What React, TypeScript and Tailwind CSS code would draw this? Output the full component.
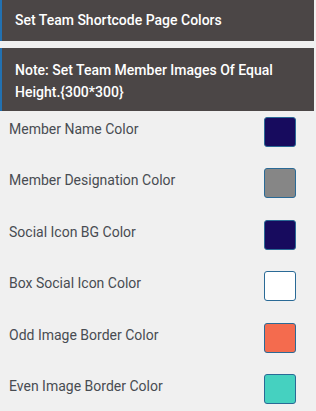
import React from 'react';

const ROWS = [
  { label: 'Member Name Color', color: '#170b5e' },
  { label: 'Member Designation Color', color: '#868686' },
  { label: 'Social Icon BG Color', color: '#170b5e' },
  { label: 'Box Social Icon Color', color: '#ffffff' },
  { label: 'Odd Image Border Color', color: '#f46b4e' },
  { label: 'Even Image Border Color', color: '#45d1c0' },
];

const App = () => {
  return (
    <div className="w-[316px] h-[411px] bg-[#f0f0f0] overflow-hidden" style={{ fontFamily: 'Roboto, "Liberation Sans", sans-serif' }}>
      <div className="w-[314px] h-[41px] bg-[#4b4646] border-l-2 border-[#2271b1] pl-[13px] flex items-center text-white text-[14px] font-medium">
        Set Team Shortcode Page Colors
      </div>
      <div className="w-[314px] mt-[7px] h-[63px] bg-[#4b4646] border-l-2 border-[#2271b1] pl-[13px] pt-[11px] text-white text-[14px] font-medium leading-[22px]">
        Note: Set Team Member Images Of Equal Height.{'{300*300}'}
      </div>
      <div className="flex flex-col gap-[21.4px] pt-[6px] pl-[9px] pr-[20px]">
        {ROWS.map(row => (
          <div key={row.label} className="flex items-start justify-between">
            <span className="mt-[2px] text-[14px] leading-[20px] text-[#484c52]">{row.label}</span>
            <div className="w-[32px] h-[30px] rounded-[3px] border border-[#2a6a96]" style={{ backgroundColor: row.color }}></div>
          </div>
        ))}
      </div>
    </div>
  );
};

export default App;
